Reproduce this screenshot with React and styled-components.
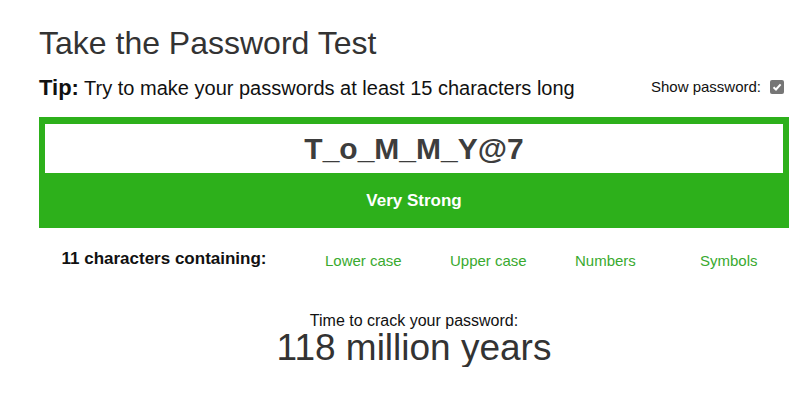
import React, { useState } from "react";
import styled, { createGlobalStyle } from "styled-components";

const GlobalStyle = createGlobalStyle`
  body {
    margin: 0;
    background: #fff;
    font-family: "Liberation Sans", Arial, sans-serif;
  }
`;

const Page = styled.div`
  width: 750px;
  padding: 25px 0 0 39px;
`;

const Title = styled.h1`
  margin: 0;
  font-size: 32px;
  line-height: 36px;
  font-weight: 400;
  color: #333;
`;

const TipRow = styled.div`
  display: flex;
  justify-content: space-between;
  align-items: center;
  margin-top: 14px;
  height: 26px;
`;

const Tip = styled.p`
  margin: 0;
  font-size: 20px;
  color: #111;

  b {
    font-size: 22px;
  }
`;

const ShowToggle = styled.label`
  display: flex;
  align-items: center;
  gap: 9px;
  font-size: 15px;
  color: #111;
  margin-right: 5px;
  margin-top: -3px;
`;

const Check = styled.span`
  width: 14px;
  height: 14px;
  border-radius: 2px;
  background: #767676;
  display: flex;
  align-items: center;
  justify-content: center;
`;

const Meter = styled.div`
  margin-top: 16px;
  background: #2db01b;
  padding: 7px 6px 0;
`;

const PasswordField = styled.input`
  display: block;
  width: 100%;
  box-sizing: border-box;
  height: 49px;
  border: none;
  outline: none;
  text-align: center;
  font-family: "Liberation Sans", Arial, sans-serif;
  font-size: 30px;
  font-weight: 700;
  color: #3d3d3d;
  background: #fff;
  padding: 0;
`;

const Strength = styled.div`
  height: 55px;
  display: flex;
  align-items: center;
  justify-content: center;
  font-size: 17px;
  font-weight: 700;
  color: #fff;
`;

const Breakdown = styled.div`
  display: grid;
  grid-template-columns: 250px repeat(4, 125px);
  align-items: baseline;
  padding-top: 21px;
`;

const CountLabel = styled.div`
  text-align: center;
  font-size: 17px;
  font-weight: 700;
  color: #111;
`;

const Feature = styled.div`
  padding-left: 36px;
  font-size: 15px;
  color: ${({ $on }) => ($on ? "#39aa2f" : "#bbb")};
  position: relative;
  top: 2px;
`;

const Crack = styled.div`
  text-align: center;
  margin-top: 43px;
  color: #111;
`;

const CrackLabel = styled.div`
  font-size: 16px;
  line-height: 18px;
`;

const CrackTime = styled.div`
  font-size: 37px;
  line-height: 38px;
  margin-top: -1px;
  color: #333;
`;

const features = [
  { name: "Lower case", on: true },
  { name: "Upper case", on: true },
  { name: "Numbers", on: true },
  { name: "Symbols", on: true },
];

export default function App() {
  const [password, setPassword] = useState("T_o_M_M_Y@7");

  return (
    <Page>
      <GlobalStyle />
      <Title>Take the Password Test</Title>
      <TipRow>
        <Tip>
          <b>Tip:</b> Try to make your passwords at least 15 characters long
        </Tip>
        <ShowToggle>
          Show password:
          <Check>
            <svg width="10" height="10" viewBox="0 0 10 10">
              <path d="M1.5 5.2 L4 7.5 L8.6 2.4" fill="none" stroke="#fff" strokeWidth="2" />
            </svg>
          </Check>
        </ShowToggle>
      </TipRow>
      <Meter>
        <PasswordField value={password} onChange={(e) => setPassword(e.target.value)} />
        <Strength>Very Strong</Strength>
      </Meter>
      <Breakdown>
        <CountLabel>{password.length} characters containing:</CountLabel>
        {features.map((f) => (
          <Feature key={f.name} $on={f.on}>
            {f.name}
          </Feature>
        ))}
      </Breakdown>
      <Crack>
        <CrackLabel>Time to crack your password:</CrackLabel>
        <CrackTime>118 million years</CrackTime>
      </Crack>
    </Page>
  );
}
